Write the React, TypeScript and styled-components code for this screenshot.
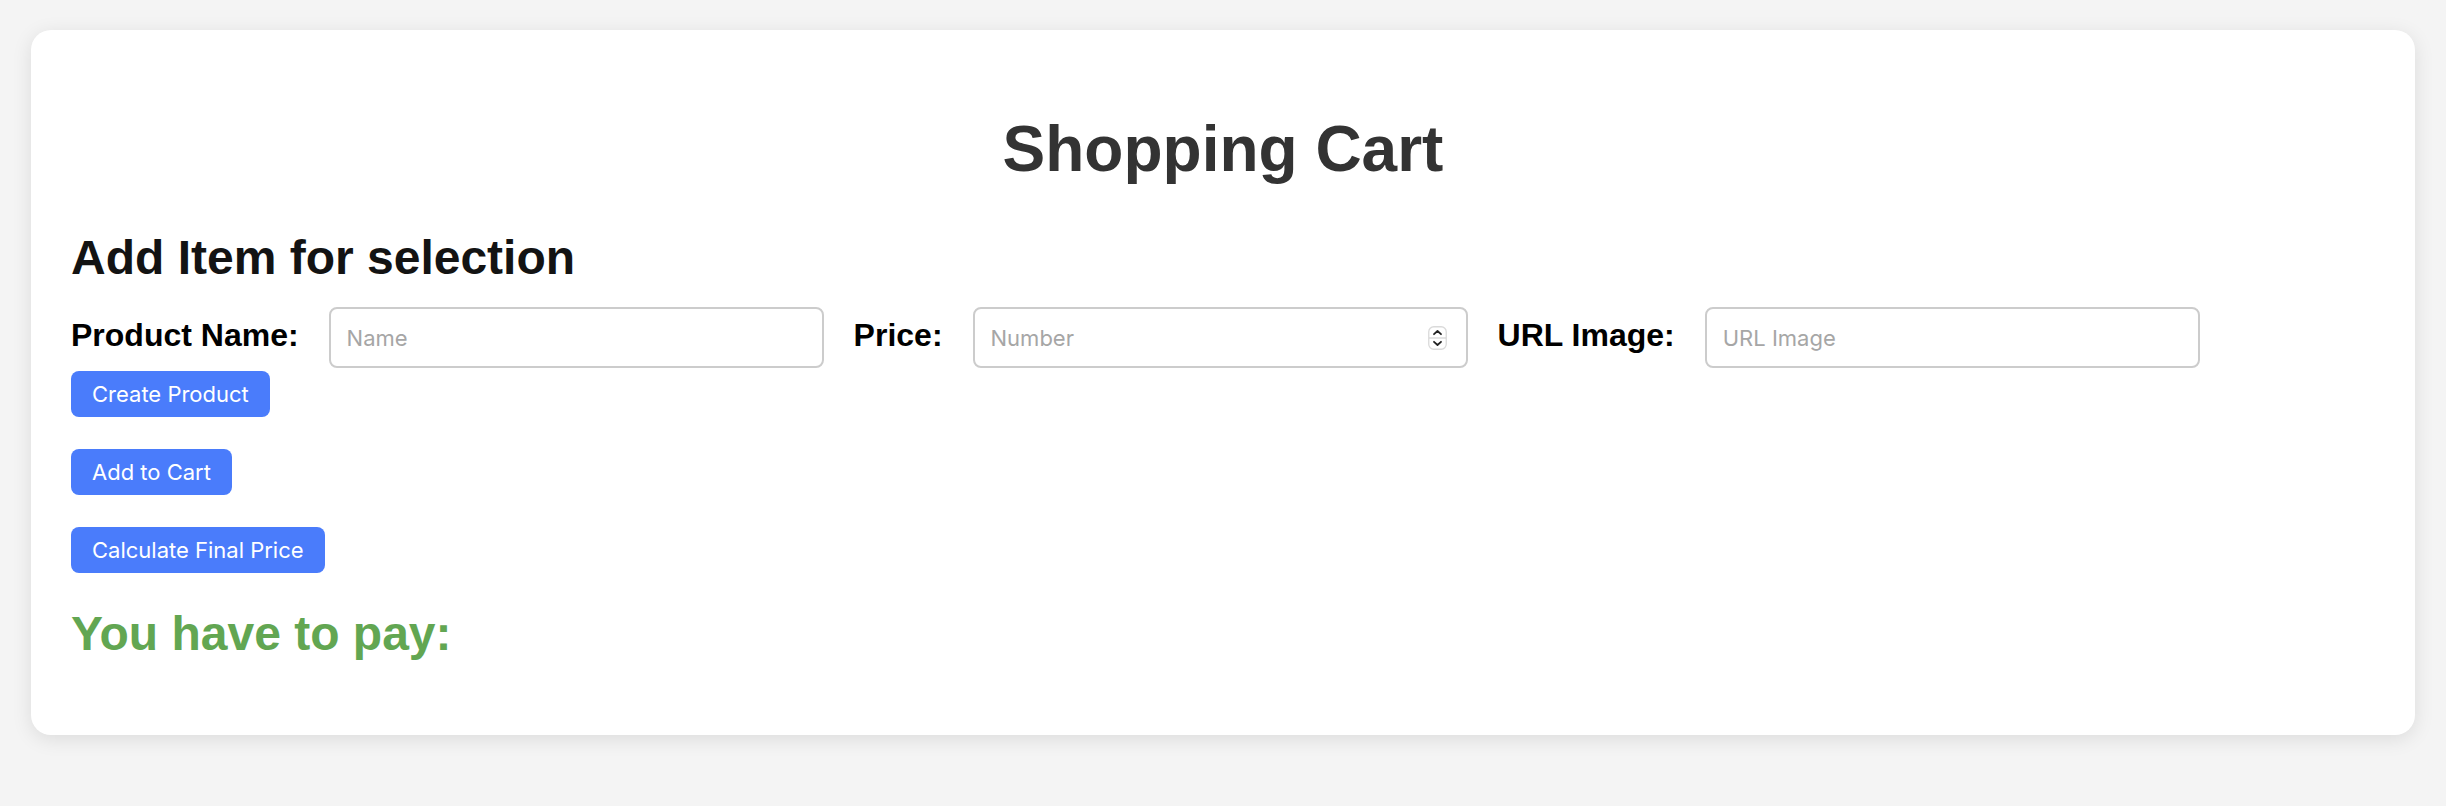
import React from "react";
import styled, { createGlobalStyle } from "styled-components";

const GlobalStyle = createGlobalStyle`
  html, body {
    margin: 0;
    padding: 0;
    background: #f4f4f4;
  }
  body {
    font-family: "Liberation Sans", Arial, Helvetica, sans-serif;
  }
  * {
    box-sizing: border-box;
  }
`;

const Page = styled.div`
  padding: 30px 31px;
  min-height: 806px;
`;

const Card = styled.main`
  background: #ffffff;
  border-radius: 20px;
  box-shadow: 0 4px 20px rgba(0, 0, 0, 0.1);
  padding: 40px;
`;

const Title = styled.h1`
  margin: 42px 0 44px;
  font-size: 64px;
  line-height: 74px;
  font-weight: 700;
  color: #333333;
  text-align: center;
`;

const SectionTitle = styled.h2<{ $color?: string; $top?: number; $bottom?: number }>`
  margin: ${(p) => p.$top ?? 0}px 0 ${(p) => p.$bottom ?? 0}px;
  font-size: 48px;
  line-height: 55px;
  font-weight: 700;
  color: ${(p) => p.$color ?? "#131313"};
`;

const FormRow = styled.div`
  display: flex;
  flex-wrap: wrap;
  align-items: baseline;
  column-gap: 30px;
  margin-top: 22px;
`;

const Label = styled.label`
  font-size: 32px;
  font-weight: 700;
  color: #000000;
  white-space: nowrap;
`;

const Field = styled.span`
  position: relative;
  display: inline-flex;
`;

const TextInput = styled.input`
  width: 495px;
  height: 61px;
  padding: 0 16px;
  border: 2px solid #cccccc;
  border-radius: 8px;
  background: #ffffff;
  font-family: Inter, "Noto Sans", sans-serif;
  font-size: 22px;
  color: #222;
  outline: none;

  &::placeholder {
    color: #a6a6a6;
  }

  &::-webkit-inner-spin-button,
  &::-webkit-outer-spin-button {
    -webkit-appearance: none;
    margin: 0;
  }
  -moz-appearance: textfield;
`;

const Spinner = styled.svg`
  position: absolute;
  right: 21px;
  top: 50%;
  transform: translateY(-50%);
  pointer-events: none;
`;

const ButtonStack = styled.div`
  display: flex;
  flex-direction: column;
  align-items: flex-start;
  gap: 32px;
  margin-top: 3px;
`;

const Button = styled.button`
  height: 46px;
  padding: 0 21px;
  border: none;
  border-radius: 8px;
  background: #4a7cfb;
  color: #ffffff;
  font-family: Inter, "Noto Sans", sans-serif;
  font-size: 22px;
  line-height: 46px;
  cursor: pointer;
  white-space: nowrap;
`;

const SpinnerIcon = () => (
  <Spinner width="19" height="24" viewBox="0 0 19 24">
    <rect x="0.75" y="0.75" width="17.5" height="22.5" rx="5" fill="#ffffff" stroke="#dadada" strokeWidth="1.3" />
    <line x1="1" y1="12" x2="18" y2="12" stroke="#d2d2d2" strokeWidth="1.2" />
    <path d="M6 8.2 L9.5 5 L13 8.2" fill="none" stroke="#222" strokeWidth="1.8" strokeLinecap="round" strokeLinejoin="round" />
    <path d="M6 15.8 L9.5 19 L13 15.8" fill="none" stroke="#222" strokeWidth="1.8" strokeLinecap="round" strokeLinejoin="round" />
  </Spinner>
);

export default function App() {
  return (
    <>
      <GlobalStyle />
      <Page>
        <Card>
          <Title>Shopping Cart</Title>
          <SectionTitle>Add Item for selection</SectionTitle>
          <FormRow>
            <Label htmlFor="name">Product Name:</Label>
            <Field>
              <TextInput id="name" type="text" placeholder="Name" />
            </Field>
            <Label htmlFor="price">Price:</Label>
            <Field>
              <TextInput id="price" type="number" placeholder="Number" />
              <SpinnerIcon />
            </Field>
            <Label htmlFor="url">URL Image:</Label>
            <Field>
              <TextInput id="url" type="text" placeholder="URL Image" />
            </Field>
          </FormRow>
          <ButtonStack>
            <Button>Create Product</Button>
            <Button>Add to Cart</Button>
            <Button>Calculate Final Price</Button>
          </ButtonStack>
          <SectionTitle $color="#62a652" $top={33} $bottom={34}>
            You have to pay:
          </SectionTitle>
        </Card>
      </Page>
    </>
  );
}
